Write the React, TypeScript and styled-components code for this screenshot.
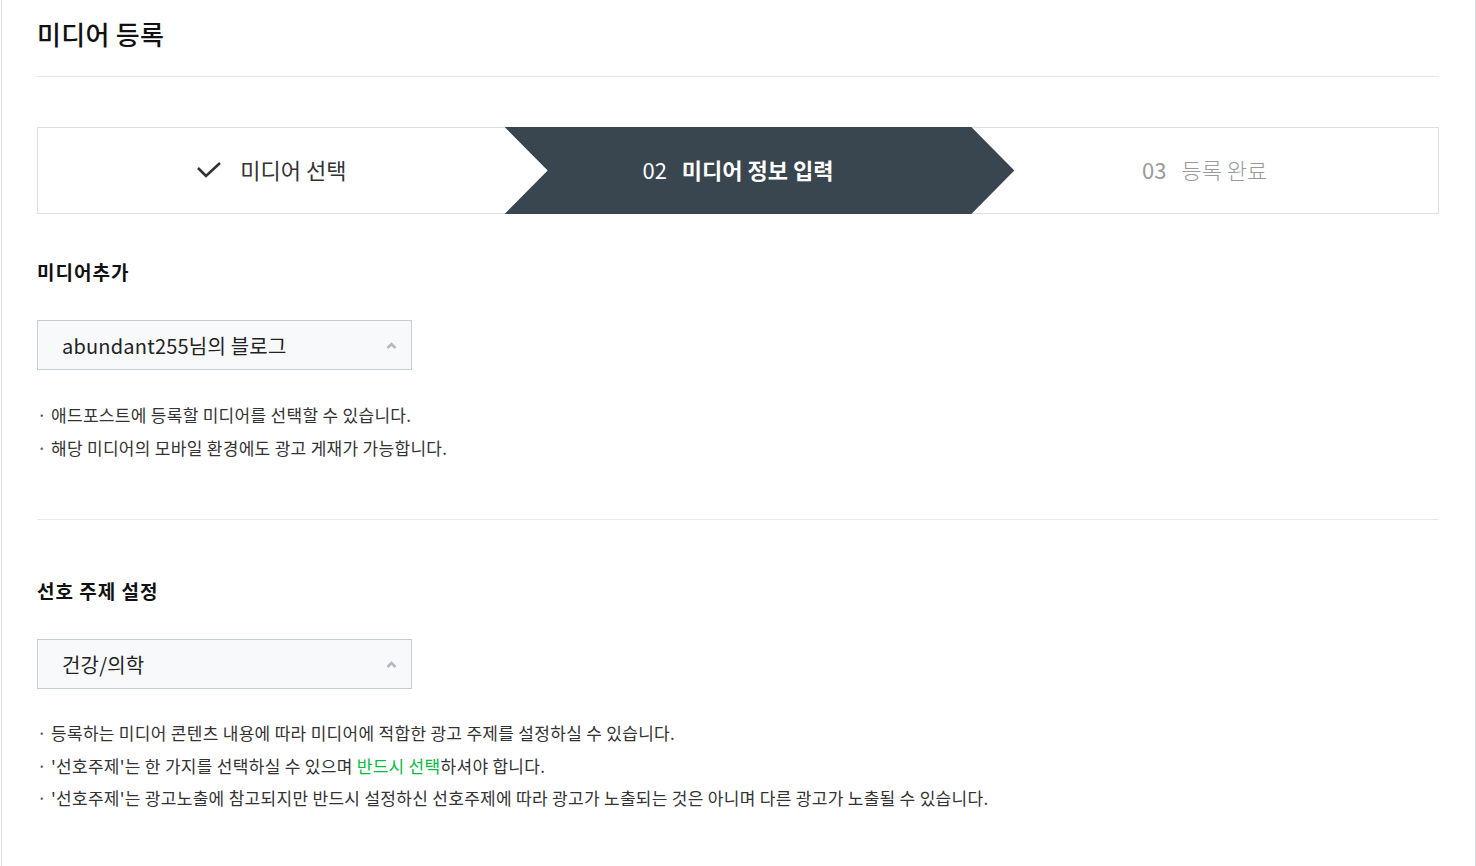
import React from "react";
import styled, { createGlobalStyle } from "styled-components";

const GlobalStyle = createGlobalStyle`
  html, body { margin: 0; padding: 0; background: #fff; }
  body { font-family: "Noto Sans CJK KR", "Noto Sans", sans-serif; color: #333; }
  * { box-sizing: border-box; }
`;

const Frame = styled.div`
  margin-left: 1px;
  width: 1475px;
  min-height: 866px;
  border-left: 1px solid #dcdfe3;
  border-right: 1px solid #dcdfe3;
  padding: 0 36px 0 35px;
`;

const Header = styled.header`
  padding: 17px 0 25px;
  border-bottom: 1px solid #e3e5e8;
`;

const Title = styled.h1`
  margin: 0;
  font-size: 26px;
  line-height: 34px;
  font-weight: 500;
  color: #111;
  letter-spacing: 0.3px;
`;

const Steps = styled.ol`
  list-style: none;
  margin: 50px 0 0;
  padding: 0;
  display: grid;
  grid-template-columns: 1fr 1fr 1fr;
  height: 87px;
  border: 1px solid #dddfe2;
`;

const Step = styled.li<{ $state: "done" | "active" | "todo" }>`
  display: flex;
  align-items: center;
  justify-content: center;
  padding-bottom: 3px;
  font-size: 22px;
  color: ${(p) => (p.$state === "todo" ? "#9a9a9a" : p.$state === "active" ? "#fff" : "#333")};
  font-weight: ${(p) => (p.$state === "todo" ? 300 : 400)};
  ${(p) =>
    p.$state === "active" &&
    `
    position: relative;
    z-index: 1;
    margin: -1px -43px -1px 0;
    padding-right: 43px;
    background: #3a464f;
    clip-path: polygon(0 0, calc(100% - 43px) 0, 100% 50%, calc(100% - 43px) 100%, 0 100%, 43px 50%);
  `}
`;

const StepNum = styled.span`
  font-weight: 400;
  margin-right: 15px;
`;

const StepLabel = styled.span<{ $bold?: boolean }>`
  font-weight: ${(p) => (p.$bold ? 700 : "inherit")};
`;

const CheckIcon = styled.svg`
  width: 26px;
  height: 18px;
  margin-right: 18px;
  margin-top: 2px;
`;

const Section = styled.section<{ $divider?: boolean; $top: number }>`
  padding-top: ${(p) => p.$top}px;
  padding-bottom: ${(p) => (p.$divider ? 55 : 0)}px;
  border-bottom: ${(p) => (p.$divider ? "1px solid #e6e8eb" : "none")};
`;

const SectionTitle = styled.h2`
  margin: 0;
  font-size: 19px;
  line-height: 26px;
  font-weight: 700;
  color: #111;
  letter-spacing: 1px;
`;

const Select = styled.div`
  margin-top: 35px;
  width: 375px;
  height: 50px;
  border: 1px solid #c7ccd2;
  background: #f8f9fa;
  display: flex;
  align-items: center;
  justify-content: space-between;
  padding: 0 14px 0 24px;
  font-size: 20px;
  color: #222;
  letter-spacing: 0.2px;
  cursor: pointer;
`;

const Caret = styled.svg`
  width: 11px;
  height: 7px;
`;

const Notes = styled.ul<{ $lh: number }>`
  list-style: none;
  margin: 28px 0 0;
  padding: 0;
  font-size: 17px;
  line-height: ${(p) => p.$lh}px;
  color: #333;
  letter-spacing: 0.3px;
`;

const Note = styled.li`
  position: relative;
  padding-left: 14px;
  &::before {
    content: "·";
    position: absolute;
    left: 0;
    top: 0;
    color: #555;
  }
`;

const Green = styled.span`
  color: #03c03c;
`;

export default function App() {
  return (
    <>
      <GlobalStyle />
      <Frame>
        <Header>
          <Title>미디어 등록</Title>
        </Header>

        <Steps>
          <Step $state="done">
            <CheckIcon viewBox="0 0 26 18" aria-hidden>
              <polyline points="2,7 10,15 24,2" fill="none" stroke="#333" strokeWidth="2.6" />
            </CheckIcon>
            <StepLabel>미디어 선택</StepLabel>
          </Step>
          <Step $state="active">
            <StepNum>02</StepNum>
            <StepLabel $bold>미디어 정보 입력</StepLabel>
          </Step>
          <Step $state="todo">
            <StepNum>03</StepNum>
            <StepLabel>등록 완료</StepLabel>
          </Step>
        </Steps>

        <Section $divider $top={45}>
          <SectionTitle>미디어추가</SectionTitle>
          <Select>
            <span>abundant255님의 블로그</span>
            <Caret viewBox="0 0 11 7" aria-hidden>
              <polyline points="1.5,6 5.5,2 9.5,6" fill="none" stroke="#b5b9be" strokeWidth="2.6" />
            </Caret>
          </Select>
          <Notes $lh={33}>
            <Note>애드포스트에 등록할 미디어를 선택할 수 있습니다.</Note>
            <Note>해당 미디어의 모바일 환경에도 광고 게재가 가능합니다.</Note>
          </Notes>
        </Section>

        <Section $top={58}>
          <SectionTitle>선호 주제 설정</SectionTitle>
          <Select>
            <span>건강/의학</span>
            <Caret viewBox="0 0 11 7" aria-hidden>
              <polyline points="1.5,6 5.5,2 9.5,6" fill="none" stroke="#b5b9be" strokeWidth="2.6" />
            </Caret>
          </Select>
          <Notes $lh={32.5}>
            <Note>등록하는 미디어 콘텐츠 내용에 따라 미디어에 적합한 광고 주제를 설정하실 수 있습니다.</Note>
            <Note>
              '선호주제'는 한 가지를 선택하실 수 있으며 <Green>반드시 선택</Green>하셔야 합니다.
            </Note>
            <Note>
              '선호주제'는 광고노출에 참고되지만 반드시 설정하신 선호주제에 따라 광고가 노출되는 것은 아니며 다른 광고가 노출될 수 있습니다.
            </Note>
          </Notes>
        </Section>
      </Frame>
    </>
  );
}
